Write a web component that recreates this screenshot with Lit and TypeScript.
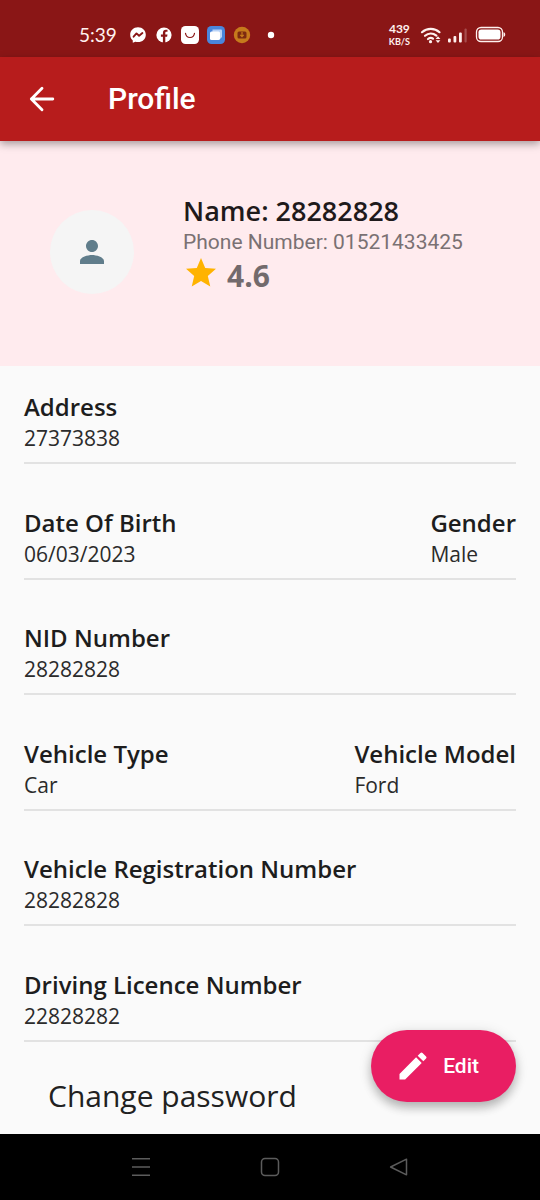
import { LitElement, html, css, svg } from "lit";
import { customElement, property } from "lit/decorators.js";

interface Field {
  label: string;
  value: string;
}

const ROWS: Field[][] = [
  [{ label: "Address", value: "27373838" }],
  [
    { label: "Date Of Birth", value: "06/03/2023" },
    { label: "Gender", value: "Male" },
  ],
  [{ label: "NID Number", value: "28282828" }],
  [
    { label: "Vehicle Type", value: "Car" },
    { label: "Vehicle Model", value: "Ford" },
  ],
  [{ label: "Vehicle Registration Number", value: "28282828" }],
  [{ label: "Driving Licence Number", value: "22828282" }],
];

const icon = (path: string) =>
  html`<svg class="icon" viewBox="0 0 24 24" aria-hidden="true">${svg`<path fill="currentColor" d=${path} />`}</svg>`;

const PERSON =
  "M12 12c2.21 0 4-1.79 4-4s-1.79-4-4-4-4 1.79-4 4 1.79 4 4 4zm0 2c-2.67 0-8 1.34-8 4v2h16v-2c0-2.66-5.33-4-8-4z";
const STAR =
  "M12 17.27 18.18 21l-1.64-7.03L22 9.24l-7.19-.61L12 2 9.19 8.63 2 9.24l5.46 4.73L5.82 21z";
const PENCIL =
  "M3 17.25V21h3.75L17.81 9.94l-3.75-3.75L3 17.25zM20.71 7.04a1 1 0 0 0 0-1.41l-2.34-2.34a1 1 0 0 0-1.41 0l-1.83 1.83 3.75 3.75 1.83-1.83z";

@customElement("status-bar")
export class StatusBar extends LitElement {
  static styles = css`
    :host {
      display: flex;
      align-items: center;
      justify-content: space-between;
      height: 57px;
      padding: 12px 33px 0 79px;
      box-sizing: border-box;
      background: #8a1616;
      color: #fff1ef;
      font-family: Lato, "Open Sans", sans-serif;
    }
    .group {
      display: flex;
      align-items: center;
    }
    .time {
      font-size: 19px;
      line-height: 24px;
      width: 48px;
    }
    .apps {
      display: flex;
      gap: 4px;
    }
    .apps svg {
      width: 22px;
      height: 22px;
      display: block;
    }
    .speed {
      display: flex;
      flex-direction: column;
      align-items: center;
      font-size: 12px;
      line-height: 14px;
      font-weight: 700;
    }
    .unit {
      font-size: 9px;
      line-height: 11px;
    }
    .signals {
      display: block;
      width: 90px;
      height: 22px;
      margin-left: 7px;
    }
  `;

  render() {
    return html`
      <div class="group">
        <span class="time">5:39</span>
        <span class="apps" aria-hidden="true">
          <svg viewBox="0 0 22 22">
            <path fill="#fff" d="M11 3.3c-4.5 0-7.8 3.2-7.8 7.4 0 2.3.9 4.2 2.5 5.5l.1 2.6 2.6-1.1c.8.2 1.7.4 2.6.4 4.5 0 7.8-3.2 7.8-7.4S15.500 3.300 11 3.300z" />
            <path fill="none" stroke="#8a1616" stroke-width="1.900" stroke-linejoin="round" stroke-linecap="round" d="M6.600 12.700 9.500 9.400l2.600 2.300 3.300-2.700" />
          </svg>
          <svg viewBox="0 0 22 22">
            <circle cx="11" cy="11" r="7.600" fill="#fff" />
            <path fill="#8a1616" d="M9.900 19v-6.200H7.900v-2.300h2V8.900c0-2 1.200-3.200 3-3.200.8 0 1.600.1 1.600.1v1.900h-1c-.9 0-1.200.6-1.200 1.200v1.600h2.200l-.4 2.300h-1.800V19z" />
          </svg>
          <svg viewBox="0 0 22 22">
            <rect x="2" y="2" width="18" height="18" rx="4.500" fill="#fff" />
            <path fill="none" stroke="#8a1616" stroke-width="1.200" stroke-linecap="round" d="M6.500 9.300c.3 2.500 2 4.200 4.500 4.200s4.200-1.700 4.500-4.200" />
          </svg>
          <svg viewBox="0 0 22 22">
            <rect x="2" y="2" width="18" height="18" rx="4.500" fill="#4a86dc" />
            <path fill="#b9d3f7" d="M7.500 5.500h8.500a1 1 0 0 1 1 1V13l-2 2H7z" />
            <rect x="5" y="7.500" width="10" height="8.500" rx="1.500" fill="#fff" />
          </svg>
          <svg viewBox="0 0 22 22">
            <circle cx="11" cy="11" r="8.200" fill="#c67a1c" />
            <rect x="6.500" y="7.500" width="9" height="7" rx="1.500" fill="#7d2a10" />
            <path fill="none" stroke="#c67a1c" stroke-width="1.200" d="M11 8v4.500M9.200 10.800l1.800 1.800 1.800-1.800" />
          </svg>
          <svg viewBox="0 0 22 22"><circle cx="14" cy="11" r="3.200" fill="#fff" /></svg>
        </span>
      </div>
      <div class="group">
        <span class="speed"><span>439</span><span class="unit">KB/S</span></span>
        <svg class="signals" viewBox="0 0 90 22" role="img" aria-label="Wi-Fi, mobile signal, battery">
          <g fill="none" stroke="currentColor" stroke-width="2.200" stroke-linecap="round">
            <path d="M5 8.200c5-4.500 12.500-4.500 17.500 0" />
            <path d="M8 11.800c3.400-3 8-3 11.400-.2" />
            <path d="M11 15c1.700-1.300 3.500-1.400 5-.3" />
          </g>
          <circle cx="13.500" cy="17.700" r="1.600" fill="currentColor" />
          <path fill="currentColor" d="m21 12.300 2.400 2.700h-4.800zM21 19l2.400-2.700h-4.800z" />
          <g fill="currentColor">
            <rect x="31" y="14.500" width="2.800" height="4" rx="1" />
            <rect x="36.500" y="12" width="2.800" height="6.500" rx="1" />
            <rect x="42" y="8.500" width="2.800" height="10" rx="1" />
            <rect x="47.500" y="4.500" width="2.200" height="14" rx="1" opacity="0.250" />
          </g>
          <rect x="59.500" y="3.500" width="26" height="14" rx="4.500" fill="none" stroke="currentColor" stroke-width="1.300" />
          <rect x="61.500" y="5.500" width="22" height="10" rx="2.800" fill="#fff" />
          <path fill="currentColor" d="M86.500 8.300c1.200.2 1.700 1 1.700 2.300s-.5 2.100-1.700 2.300z" />
        </svg>
      </div>
    `;
  }
}

@customElement("nav-bar")
export class NavBar extends LitElement {
  static styles = css`
    :host {
      display: flex;
      justify-content: center;
      align-items: center;
      gap: 81px;
      height: 66px;
      background: #000;
    }
    button {
      width: 48px;
      height: 48px;
      padding: 0;
      border: 0;
      background: none;
      color: #5c5c5c;
    }
    svg {
      display: block;
      width: 24px;
      height: 24px;
      margin: auto;
      fill: none;
      stroke: currentColor;
      stroke-width: 1.500;
    }
  `;

  render() {
    return html`
      <button aria-label="Recent apps">
        <svg viewBox="0 0 24 24"><path d="M3 3.800h18M3 12h18M3 20.200h18" /></svg>
      </button>
      <button aria-label="Home">
        <svg viewBox="0 0 24 24"><rect x="3.500" y="3.500" width="17" height="17" rx="3.500" /></svg>
      </button>
      <button aria-label="Back">
        <svg viewBox="0 0 24 24"><path stroke-linejoin="round" d="M19.500 4.200v15.600L3.600 12z" /></svg>
      </button>
    `;
  }
}

@customElement("field-row")
export class FieldRow extends LitElement {
  @property({ attribute: false }) fields: Field[] = [];

  static styles = css`
    :host {
      display: block;
      border-bottom: 2px solid #e2e2e2;
      padding-bottom: 8px;
    }
    .row {
      display: flex;
      justify-content: space-between;
      margin: 0;
    }
    .label {
      font-size: 24px;
      line-height: 33px;
      font-weight: 600;
      color: #1d1d1d;
    }
    .value {
      margin: 0;
      font-size: 21px;
      line-height: 31px;
      color: #2b2b2b;
    }
  `;

  render() {
    return html`
      <dl class="row">
        ${this.fields.map(
          (f) => html`<div>
            <dt class="label">${f.label}</dt>
            <dd class="value">${f.value}</dd>
          </div>`
        )}
      </dl>
    `;
  }
}

@customElement("app-root")
export class AppRoot extends LitElement {
  static styles = css`
    :host {
      display: flex;
      flex-direction: column;
      min-height: 100vh;
      background: #fafafa;
      font-family: "Open Sans", "Noto Sans", sans-serif;
    }
    .icon {
      display: block;
      width: 36px;
      height: 36px;
      flex: none;
    }
    .bar {
      display: flex;
      align-items: center;
      gap: 48px;
      height: 84px;
      padding: 0 24px;
      background: #b71c1c;
      color: #fff;
      box-shadow: 0 3px 8px rgba(0, 0, 0, 0.350);
      z-index: 1;
    }
    .back {
      padding: 0;
      border: 0;
      background: none;
      color: inherit;
    }
    .title {
      margin: 0;
      font: 500 30px/38px Roboto, sans-serif;
    }
    .hero {
      display: flex;
      align-items: center;
      gap: 49px;
      height: 225px;
      padding: 0 50px 3px;
      box-sizing: border-box;
      background: #ffebee;
    }
    .avatar {
      display: grid;
      place-items: center;
      width: 84px;
      height: 84px;
      border-radius: 50%;
      background: #f5f5f5;
      color: #607d8b;
    }
    .details {
      padding-bottom: 15px;
    }
    .name {
      margin: 0;
      font-size: 27px;
      line-height: 36px;
      font-weight: 600;
      color: #1f1a1b;
    }
    .phone {
      margin: 0;
      font: 400 21px/26px Roboto, sans-serif;
      color: #7a7173;
    }
    .rating {
      display: flex;
      align-items: flex-start;
      gap: 8px;
      margin: 0;
      font-size: 30px;
      line-height: 41px;
      font-weight: 700;
      color: #736a6c;
    }
    .star {
      color: #ffb300;
    }
    .content {
      position: relative;
      display: flex;
      flex-direction: column;
      flex: 1;
      padding: 24px 24px 18px;
    }
    .fields {
      display: flex;
      flex-direction: column;
      justify-content: space-between;
      gap: 24px;
      flex: 1;
    }
    .password {
      align-self: flex-start;
      margin: 33px 24px 0;
      font-size: 30px;
      line-height: 41px;
      color: #212121;
      text-decoration: none;
    }
    .edit {
      position: absolute;
      right: 24px;
      bottom: 32px;
      display: flex;
      align-items: center;
      gap: 12px;
      height: 72px;
      padding: 0 37px 0 24px;
      border: 0;
      border-radius: 36px;
      background: #e91e63;
      color: #fff;
      font: 500 21px/24px Roboto, sans-serif;
      box-shadow: 0 6px 10px rgba(0, 0, 0, 0.220), 0 2px 14px rgba(0, 0, 0, 0.120);
    }
  `;

  render() {
    return html`
      <status-bar></status-bar>
      <header class="bar">
        <button class="back" aria-label="Back">
          <svg class="icon" viewBox="0 0 24 24" fill="none" stroke="currentColor" stroke-width="1.900" stroke-linecap="round" stroke-linejoin="round" aria-hidden="true">
            <path d="M19.200 12H4.900M12 4.900 4.900 12l7.100 7.100" />
          </svg>
        </button>
        <h1 class="title">Profile</h1>
      </header>
      <section class="hero">
        <div class="avatar">${icon(PERSON)}</div>
        <div class="details">
          <h2 class="name">Name: 28282828</h2>
          <p class="phone">Phone Number: 01521433425</p>
          <p class="rating"><span class="star">${icon(STAR)}</span>4.6</p>
        </div>
      </section>
      <main class="content">
        <div class="fields">${ROWS.map((r) => html`<field-row .fields=${r}></field-row>`)}</div>
        <a class="password" href="#password">Change password</a>
        <button class="edit">${icon(PENCIL)}Edit</button>
      </main>
      <nav-bar></nav-bar>
    `;
  }
}
